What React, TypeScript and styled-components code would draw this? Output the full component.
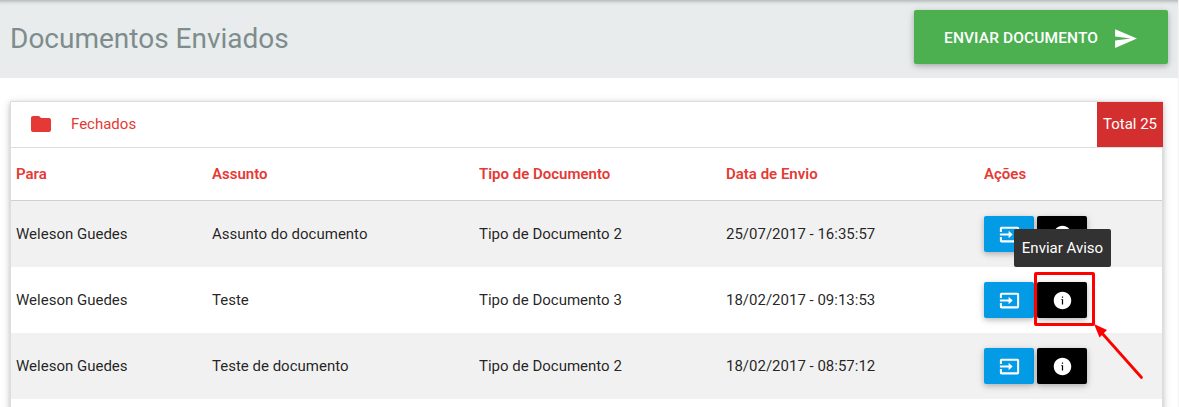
import React from "react";
import styled, { createGlobalStyle } from "styled-components";

const GlobalStyle = createGlobalStyle`
  *, *::before, *::after { box-sizing: border-box; }
  html, body { margin: 0; padding: 0; }
  body {
    height: 407px;
    overflow: hidden;
    background: #fff;
    color: rgba(0, 0, 0, 0.87);
    font-family: Roboto, "Liberation Sans", sans-serif;
    font-size: 15px;
    line-height: 1.5;
  }
`;

const raised = "0 2px 5px 0 rgba(0,0,0,.18), 0 2px 10px 0 rgba(0,0,0,.12)";

const Page = styled.div`
  position: relative;
  width: 1179px;
  height: 407px;
  overflow: hidden;
  border-right: 1px solid #f4f4f4;
`;

const TopBar = styled.header`
  display: flex;
  justify-content: space-between;
  align-items: flex-start;
  height: 78px;
  padding: 10px 10px 0;
  background: #e8ecec;
  box-shadow: inset 0 5px 4px -4px rgba(0, 0, 0, 0.3);
`;

const Title = styled.h1`
  margin: 12px 0 0;
  color: #7f8c8d;
  font-size: 28px;
  font-weight: 400;
  line-height: 34px;
  white-space: nowrap;
`;

const SendButton = styled.button`
  display: flex;
  align-items: center;
  width: 254px;
  height: 54px;
  padding: 2px 0 0 30px;
  border: 0;
  border-radius: 2px;
  background: #4caf50;
  box-shadow: ${raised};
  color: #fff;
  font: 500 15.5px/54px Roboto, "Liberation Sans", sans-serif;
  letter-spacing: 0.12px;
  text-transform: uppercase;
  white-space: nowrap;
`;

const SendLabel = styled.span`
  width: 169px;
  text-align: left;
`;

const Icon = styled.svg<{ $size: number }>`
  display: block;
  flex: none;
  width: ${(p) => p.$size}px;
  height: ${(p) => p.$size}px;
  fill: currentColor;
`;

const Card = styled.section`
  width: 1153px;
  height: 330px;
  margin: 23px 0 0 10px;
  border: 1px solid #ddd;
  box-shadow: ${raised};
`;

const CardHeader = styled.div`
  display: flex;
  align-items: center;
  height: 46px;
  margin-right: -1px;
  padding-left: 18px;
  border-bottom: 1px solid #ddd;
  color: #e53935;
`;

const FolderSlot = styled.span`
  padding-bottom: 1px;
`;

const CardTitle = styled.span`
  flex: 1;
  margin-left: 18px;
`;

const Total = styled.span`
  width: 66px;
  height: 45px;
  background: #d32f2f;
  color: #fff;
  line-height: 45px;
  text-align: center;
  white-space: nowrap;
`;

const Table = styled.table`
  width: 1151px;
  border-collapse: collapse;
  table-layout: fixed;
`;

const HeadCell = styled.th<{ $width: number }>`
  width: ${(p) => p.$width}px;
  height: 53px;
  padding: 0 5px;
  box-shadow: inset 0 -1px 0 #d0d0d0;
  color: #e53935;
  font-weight: 600;
  text-align: left;
`;

const Row = styled.tr`
  height: 66px;
  &:nth-child(odd) { background: #f1f1f1; }
`;

const Cell = styled.td`
  padding: 0 5px;
  white-space: nowrap;
`;

const Actions = styled.div`
  display: flex;
  gap: 3px;
`;

const ActionButton = styled.button<{ $color: string }>`
  display: flex;
  align-items: center;
  justify-content: center;
  width: 50px;
  height: 36px;
  padding: 0;
  border: 0;
  border-radius: 2px;
  background: ${(p) => p.$color};
  box-shadow: ${raised};
  color: #fff;
`;

const Tooltip = styled.div`
  position: absolute;
  left: 1014px;
  top: 229px;
  width: 97px;
  height: 38px;
  border-radius: 2px;
  background: #323232;
  color: #fff;
  line-height: 38px;
  text-align: center;
  white-space: nowrap;
`;

const Highlight = styled.div`
  position: absolute;
  left: 1034px;
  top: 272px;
  width: 61px;
  height: 54px;
  border: 3px solid #f00;
  border-radius: 2px;
`;

const Arrow = styled.svg`
  position: absolute;
  left: 1090px;
  top: 320px;
  width: 60px;
  height: 64px;
`;

const columns = [
  { label: "Para", width: 196 },
  { label: "Assunto", width: 267 },
  { label: "Tipo de Documento", width: 247 },
  { label: "Data de Envio", width: 258 },
  { label: "Ações", width: 183 },
];

const documents = [
  ["Weleson Guedes", "Assunto do documento", "Tipo de Documento 2", "25/07/2017 - 16:35:57"],
  ["Weleson Guedes", "Teste", "Tipo de Documento 3", "18/02/2017 - 09:13:53"],
  ["Weleson Guedes", "Teste de documento", "Tipo de Documento 2", "18/02/2017 - 08:57:12"],
];

const paths = {
  send: "M2.01 21L23 12 2.01 3 2 10l15 2-15 2z",
  folder: "M10 4H4c-1.1 0-1.99.9-1.99 2L2 18c0 1.1.9 2 2 2h16c1.1 0 2-.9 2-2V8c0-1.1-.9-2-2-2h-8l-2-2z",
  input:
    "M21 3H3c-1.1 0-2 .9-2 2v4.2h2.3V5.3h17.4v13.4H3.3v-3.9H1V19c0 1.1.9 2 2 2h18c1.1 0 2-.9 2-2V5c0-1.1-.9-2-2-2zM11 16.2l4.6-4.2L11 7.8v3.1H1v2.2h10z",
  info: "M12 2C6.48 2 2 6.48 2 12s4.48 10 10 10 10-4.48 10-10S17.52 2 12 2zm.7 14.7h-1.4v-5.2h-.8v-.9h2.2v6.1zm0-7.8h-1.4V7.4h1.4v1.5z",
};

function Glyph({ name, size }: { name: keyof typeof paths; size: number }) {
  return (
    <Icon $size={size} viewBox="0 0 24 24" aria-hidden="true">
      <path d={paths[name]} />
    </Icon>
  );
}

export default function App() {
  return (
    <>
      <GlobalStyle />
      <Page>
        <TopBar>
          <Title>Documentos Enviados</Title>
          <SendButton>
            <SendLabel>Enviar documento</SendLabel>
            <Glyph name="send" size={25} />
          </SendButton>
        </TopBar>
        <Card>
          <CardHeader>
            <FolderSlot>
              <Glyph name="folder" size={24} />
            </FolderSlot>
            <CardTitle>Fechados</CardTitle>
            <Total>Total 25</Total>
          </CardHeader>
          <Table>
            <thead>
              <tr>
                {columns.map((c) => (
                  <HeadCell key={c.label} $width={c.width}>{c.label}</HeadCell>
                ))}
              </tr>
            </thead>
            <tbody>
              {documents.map((doc) => (
                <Row key={doc[3]}>
                  {doc.map((value) => (
                    <Cell key={value}>{value}</Cell>
                  ))}
                  <Cell>
                    <Actions>
                      <ActionButton $color="#039be5" aria-label="Abrir">
                        <Glyph name="input" size={21} />
                      </ActionButton>
                      <ActionButton $color="#000" aria-label="Enviar aviso">
                        <Glyph name="info" size={21} />
                      </ActionButton>
                    </Actions>
                  </Cell>
                </Row>
              ))}
            </tbody>
          </Table>
        </Card>
        <Tooltip>Enviar Aviso</Tooltip>
        <Highlight />
        <Arrow viewBox="0 0 60 64">
          <path d="M51.5 57.5L11 12" stroke="#f00" strokeWidth="2.8" strokeLinecap="round" />
          <path d="M4 4L17 10 9.5 17.5z" fill="#f00" />
        </Arrow>
      </Page>
    </>
  );
}
